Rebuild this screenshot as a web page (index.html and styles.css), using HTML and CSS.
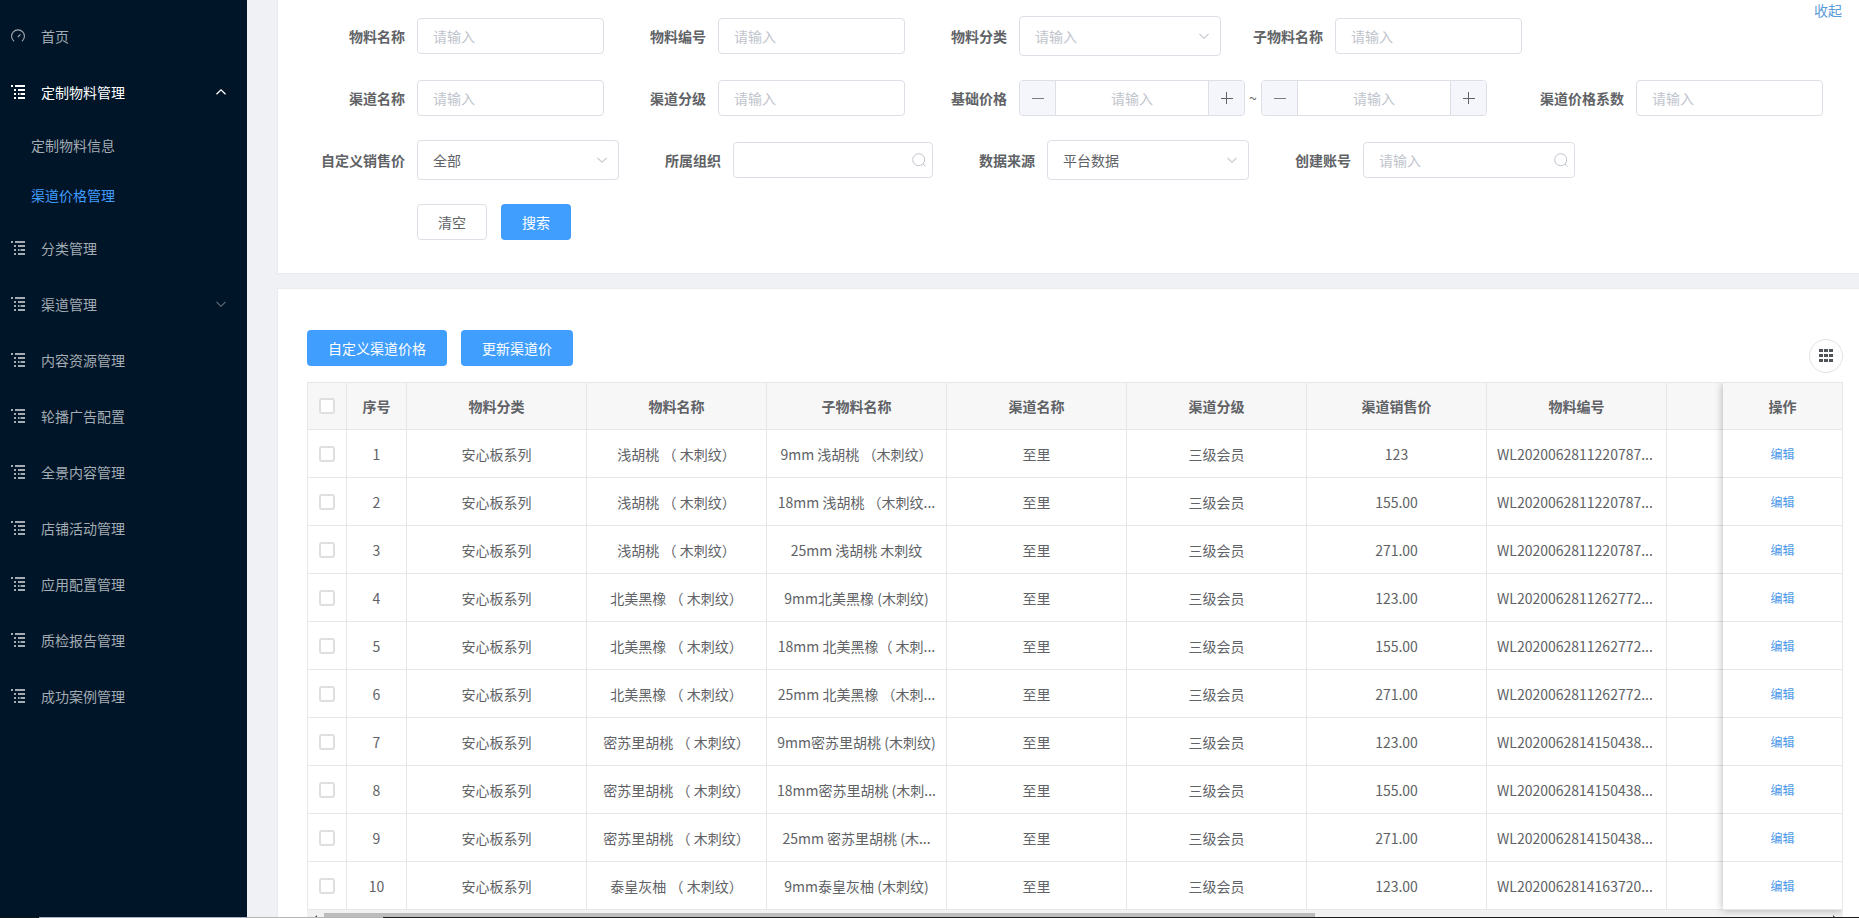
FILE: index.html
```html
<!DOCTYPE html>
<html lang="zh-CN">
<head>
<meta charset="utf-8">
<title>渠道价格管理</title>
<link rel="stylesheet" href="styles.css">
</head>
<body>
<svg class="defs" aria-hidden="true">
  <symbol id="tree" viewBox="0 0 14 14"><path d="M0 0h2v2H0zM4 0h10v2H4zM3 4h2v2H3zM7 4h7v2H7zM3 8h2v2H3zM7 8h1.500v2H7zM9.500 8H14v2H9.500zM3 12h2v2H3zM7 12h7v2H7z" fill="currentColor"/></symbol>
  <symbol id="gauge" viewBox="0 0 14 14"><path d="M3 12.300A6.400 6.400 0 1 1 11 12.300M6.800 8l2.700-2.600" fill="none" stroke="currentColor" stroke-width="1.100"/></symbol>
  <symbol id="down" viewBox="0 0 12 12"><path d="M1.500 3.800 6 8.300l4.500-4.500" fill="none" stroke="currentColor" stroke-width="1.100"/></symbol>
  <symbol id="up" viewBox="0 0 12 12"><path d="M1.500 8.300 6 3.800l4.500 4.500" fill="none" stroke="currentColor" stroke-width="1.300"/></symbol>
  <symbol id="search" viewBox="0 0 14 14"><circle cx="6.700" cy="6.700" r="6" fill="none" stroke="currentColor"/><path d="m11 11 2.500 2.500" stroke="currentColor"/></symbol>
</svg>
<div class="app">
  <nav class="sidebar">
    <a class="item" href="#"><svg class="ico"><use href="#gauge"/></svg><span>首页</span></a>
    <a class="item open" href="#"><svg class="ico"><use href="#tree"/></svg><span>定制物料管理</span><svg class="arrow"><use href="#up"/></svg></a>
    <a class="sub" href="#">定制物料信息</a>
    <a class="sub active" href="#">渠道价格管理</a>
    <a class="item" href="#"><svg class="ico"><use href="#tree"/></svg><span>分类管理</span></a>
    <a class="item" href="#"><svg class="ico"><use href="#tree"/></svg><span>渠道管理</span><svg class="arrow"><use href="#down"/></svg></a>
    <a class="item" href="#"><svg class="ico"><use href="#tree"/></svg><span>内容资源管理</span></a>
    <a class="item" href="#"><svg class="ico"><use href="#tree"/></svg><span>轮播广告配置</span></a>
    <a class="item" href="#"><svg class="ico"><use href="#tree"/></svg><span>全景内容管理</span></a>
    <a class="item" href="#"><svg class="ico"><use href="#tree"/></svg><span>店铺活动管理</span></a>
    <a class="item" href="#"><svg class="ico"><use href="#tree"/></svg><span>应用配置管理</span></a>
    <a class="item" href="#"><svg class="ico"><use href="#tree"/></svg><span>质检报告管理</span></a>
    <a class="item" href="#"><svg class="ico"><use href="#tree"/></svg><span>成功案例管理</span></a>
  </nav>
  <main class="main">
    <section class="card filters">
      <a class="collapse" href="#">收起</a>
      <form class="form">
        <div class="row">
          <div class="field"><label for="f1">物料名称</label><input class="text" id="f1" placeholder="请输入"></div>
          <div class="field"><label for="f2">物料编号</label><input class="text" id="f2" placeholder="请输入"></div>
          <div class="field"><label for="f3">物料分类</label><span class="pick"><select class="empty" id="f3"><option>请输入</option></select><svg><use href="#down"/></svg></span></div>
          <div class="field"><label for="f4">子物料名称</label><input class="text" id="f4" placeholder="请输入"></div>
        </div>
        <div class="row">
          <div class="field"><label for="f5">渠道名称</label><input class="text" id="f5" placeholder="请输入"></div>
          <div class="field"><label for="f6">渠道分级</label><input class="text" id="f6" placeholder="请输入"></div>
          <div class="field range"><label for="f7">基础价格</label>
            <span class="number"><button type="button" aria-label="减少"><i class="minus"></i></button><input id="f7" placeholder="请输入"><button type="button" aria-label="增加"><i class="minus plus"></i></button></span>
            <span class="tilde">~</span>
            <span class="number"><button type="button" aria-label="减少"><i class="minus"></i></button><input aria-label="最高基础价格" placeholder="请输入"><button type="button" aria-label="增加"><i class="minus plus"></i></button></span>
          </div>
          <div class="field"><label for="f8">渠道价格系数</label><input class="text" id="f8" placeholder="请输入"></div>
        </div>
        <div class="row">
          <div class="field"><label for="f9">自定义销售价</label><span class="pick"><select id="f9"><option>全部</option></select><svg><use href="#down"/></svg></span></div>
          <div class="field"><label for="f10">所属组织</label><span class="find org"><input class="text" id="f10"><svg><use href="#search"/></svg></span></div>
          <div class="field"><label for="f11">数据来源</label><span class="pick"><select id="f11"><option>平台数据</option></select><svg><use href="#down"/></svg></span></div>
          <div class="field"><label for="f12">创建账号</label><span class="find"><input class="text" id="f12" placeholder="请输入"><svg><use href="#search"/></svg></span></div>
        </div>
        <div class="row actions"><button type="reset" class="btn plain">清空</button><button type="button" class="btn">搜索</button></div>
      </form>
    </section>
    <section class="card list">
      <div class="tools">
        <button class="btn" type="button">自定义渠道价格</button><button class="btn" type="button">更新渠道价</button>
        <button class="cols" type="button" aria-label="列设置"><svg viewBox="0 0 14 14"><path d="M0 0h4v3H0zM5 0h4v3H5zM10 0h4v3h-4zM0 5h4v3H0zM5 5h4v3H5zM10 5h4v3h-4zM0 10h4v3H0zM5 10h4v3H5zM10 10h4v3h-4z" fill="#505358"/></svg></button>
      </div>
      <div class="grid">
        <div class="scroll">
          <table class="data">
            <colgroup><col class="c-check"><col class="c-no"><col><col><col><col><col><col><col><col></colgroup>
            <thead><tr><th><input type="checkbox" aria-label="全选"></th><th>序号</th><th>物料分类</th><th>物料名称</th><th>子物料名称</th><th>渠道名称</th><th>渠道分级</th><th>渠道销售价</th><th>物料编号</th><th></th></tr></thead>
            <tbody id="rows"></tbody>
          </table>
        </div>
        <table class="data fixed">
          <thead><tr><th>操作</th></tr></thead>
          <tbody id="ops"></tbody>
        </table>
      </div>
      <div class="bar"><i class="left"></i><span class="thumb"></span><i class="right"></i></div>
    </section>
  </main>
</div>
<div class="edge"></div>
<script src="table.js"></script>
</body>
</html>
```
FILE: styles.css
```css
* { box-sizing: border-box; }
body { margin: 0; font: 14px/20px "Noto Sans CJK SC", "Noto Sans", sans-serif; color: #606266; background: #eff1f5; }
a { text-decoration: none; }
input, select, button { font: inherit; color: inherit; margin: 0; }
.defs { position: absolute; width: 0; height: 0; }
.app { display: flex; height: calc(100vh - 1px); overflow: hidden; }
.edge { height: 1px; background: linear-gradient(90deg, #10151a 39px, #a9b0bc 39px 247px, #b4b4b4 247px 383px, #1c1c1c 383px); }
.sidebar { flex: 0 0 247px; background: #001528; padding-top: 8px; }
.item { display: flex; align-items: center; height: 56px; padding: 0 20px 0 11px; color: #a3abb3; }
.ico { width: 14px; height: 14px; margin-right: 16px; }
.arrow { width: 12px; height: 12px; margin-left: auto; color: #66727d; }
.open, .open .arrow { color: #fff; }
.sub { display: flex; align-items: center; height: 50px; padding-left: 31px; color: #a3abb3; }
.sub.active { color: #409eff; }
.main { flex: 1; min-width: 0; padding-left: 30px; }
.card { position: relative; background: #fff; border: 1px solid #e8ebf0; border-right: 0; }
.filters { border-top: 0; padding: 5px 0 20px 39px; margin-bottom: 14px; }
.collapse { position: absolute; right: 17px; top: 0; color: #5b9bd8; }
.row { display: flex; align-items: center; height: 62px; gap: 14px; }
.field { display: flex; align-items: center; }
.field label { width: 100px; padding-right: 12px; text-align: right; font-weight: 700; white-space: nowrap; }
.text { width: 187px; height: 36px; padding: 0 15px; border: 1px solid #dcdfe6; border-radius: 4px; background: #fff; outline: 0; }
::placeholder { color: #c0c4cc; opacity: 1; }
.pick, .find { display: flex; position: relative; width: 202px; }
.pick select { appearance: none; width: 100%; height: 40px; padding: 0 15px; border: 1px solid #dcdfe6; border-radius: 4px; background: #fff; }
.pick .empty { color: #c0c4cc; }
.pick svg { position: absolute; right: 11px; top: 14px; width: 12px; height: 12px; color: #c0c4cc; }
.find { width: 212px; }
.find.org { width: 200px; }
.find .text { width: 100%; }
.find svg { position: absolute; right: 7px; top: 11px; width: 14px; height: 14px; color: #c0c4cc; }
.range { margin-right: 35px; }
.number { display: flex; width: 226px; height: 36px; border: 1px solid #dcdfe6; border-radius: 4px; overflow: hidden; }
.number input { flex: 1; min-width: 0; border: 0; text-align: center; outline: 0; }
.number button { display: flex; align-items: center; justify-content: center; width: 36px; border: 0; padding: 0; background: #f5f6fc; border-right: 1px solid #dcdfe6; }
.number button:last-child { border-right: 0; border-left: 1px solid #dcdfe6; }
.minus { width: 12px; height: 12px; background: linear-gradient(#7a7d84, #7a7d84) center / 12px 1px no-repeat; }
.plus { background: linear-gradient(#606266, #606266) center / 12px 1px no-repeat, linear-gradient(#606266, #606266) center / 1px 12px no-repeat; }
.tilde { width: 16px; text-align: center; }
.btn { height: 36px; padding: 0 21px; border: 0; border-radius: 4px; background: #409eff; color: #fff; }
.plain { background: #fff; border: 1px solid #dcdfe6; color: #606266; padding: 0 20px; }
.actions { padding-left: 100px; }
.list { padding: 41px 16px 0 29px; border-bottom: 0; }
.tools { display: flex; gap: 14px; height: 52px; }
.cols { display: flex; align-items: center; justify-content: center; width: 34px; height: 34px; margin: 9px 0 0 auto; padding: 0; border: 1px solid #e0e2e6; border-radius: 50%; background: #fff; }
.cols svg { width: 14px; height: 14px; }
.grid { display: flex; position: relative; border: 1px solid #e6e7ea; border-bottom: 0; }
.scroll { flex: 1; min-width: 0; overflow: hidden; }
.data { width: 1539px; table-layout: fixed; border-collapse: separate; border-spacing: 0; }
.data col { width: 180px; }
.data .c-check { width: 39px; }
.data .c-no { width: 60px; }
.data th, .data td { height: 48px; padding: 0; border-right: 1px solid #e6e7ea; border-bottom: 1px solid #e6e7ea; text-align: center; white-space: nowrap; }
.data th { height: 47px; background: #f7f7f8; font-weight: 700; }
.data .code { padding-left: 10px; text-align: left; }
.data input { appearance: none; display: block; width: 16px; height: 16px; margin: 0 auto; border: 2px solid #dfdfe0; border-radius: 3px; background: #fff; }
.data.fixed { position: absolute; right: 0; top: 0; width: 119px; background: #fff; box-shadow: 0 0 8px rgba(0, 0, 0, .3); clip-path: inset(0 0 -6px -10px); }
.data.fixed th, .data.fixed td { border-right: 0; }
.data.fixed a { font-size: 12px; color: #4a98e8; }
.bar { display: flex; align-items: center; height: 17px; padding: 0 6px; background: #f1f1f1; }
.thumb { width: 65%; height: 12px; margin-right: auto; margin-left: 7px; background: #bcbcbc; }
.left, .right { border: 4px solid transparent; border-right-color: #505050; border-left: 0; }
.right { border-left: 4px solid #505050; border-right: 0; }
```
FILE: table.js
```js
const rows = [
  ["浅胡桃 （ 木刺纹）", "9mm 浅胡桃 （木刺纹）", "123", "WL2020062811220787..."],
  ["浅胡桃 （ 木刺纹）", "18mm 浅胡桃 （木刺纹...", "155.00", "WL2020062811220787..."],
  ["浅胡桃 （ 木刺纹）", "25mm 浅胡桃 木刺纹", "271.00", "WL2020062811220787..."],
  ["北美黑橡 （ 木刺纹）", "9mm北美黑橡 (木刺纹)", "123.00", "WL2020062811262772..."],
  ["北美黑橡 （ 木刺纹）", "18mm 北美黑橡（ 木刺...", "155.00", "WL2020062811262772..."],
  ["北美黑橡 （ 木刺纹）", "25mm 北美黑橡 （木刺...", "271.00", "WL2020062811262772..."],
  ["密苏里胡桃 （ 木刺纹）", "9mm密苏里胡桃 (木刺纹)", "123.00", "WL2020062814150438..."],
  ["密苏里胡桃 （ 木刺纹）", "18mm密苏里胡桃 (木刺...", "155.00", "WL2020062814150438..."],
  ["密苏里胡桃 （ 木刺纹）", "25mm 密苏里胡桃 (木...", "271.00", "WL2020062814150438..."],
  ["泰皇灰柚 （ 木刺纹）", "9mm泰皇灰柚 (木刺纹)", "123.00", "WL2020062814163720..."]
];
document.getElementById("rows").innerHTML = rows.map(([name, child, price, code], i) =>
  `<tr><td><input type="checkbox" aria-label="选择第${i + 1}行"></td><td>${i + 1}</td><td>安心板系列</td><td>${name}</td><td>${child}</td><td>至里</td><td>三级会员</td><td>${price}</td><td class="code">${code}</td><td></td></tr>`).join("");
document.getElementById("ops").innerHTML = rows.map(() => `<tr><td><a href="#">编辑</a></td></tr>`).join("");
```
